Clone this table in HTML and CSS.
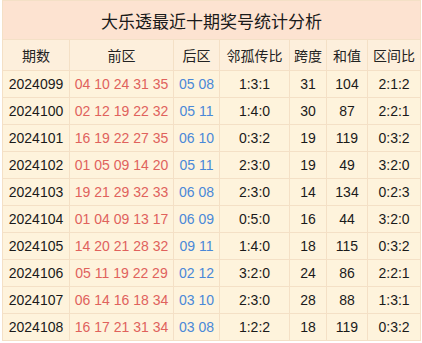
FILE: index.html
```html
<!DOCTYPE html>
<html lang="zh">
<head>
<meta charset="utf-8">
<link rel="stylesheet" href="styles.css">
</head>
<body>
<div class="wrap">
<table class="stats">
<colgroup>
<col class="c1"><col class="c2"><col class="c3"><col class="c4"><col class="c5"><col class="c6"><col class="c7">
</colgroup>
<thead>
<tr class="title"><th colspan="7">大乐透最近十期奖号统计分析</th></tr>
<tr class="head"><th>期数</th><th>前区</th><th>后区</th><th>邻孤传比</th><th>跨度</th><th>和值</th><th>区间比</th></tr>
</thead>
<tbody>
<tr><td>2024099</td><td class="red">04 10 24 31 35</td><td class="blue">05 08</td><td>1:3:1</td><td>31</td><td>104</td><td>2:1:2</td></tr>
<tr><td>2024100</td><td class="red">02 12 19 22 32</td><td class="blue">05 11</td><td>1:4:0</td><td>30</td><td>87</td><td>2:2:1</td></tr>
<tr><td>2024101</td><td class="red">16 19 22 27 35</td><td class="blue">06 10</td><td>0:3:2</td><td>19</td><td>119</td><td>0:3:2</td></tr>
<tr><td>2024102</td><td class="red">01 05 09 14 20</td><td class="blue">05 11</td><td>2:3:0</td><td>19</td><td>49</td><td>3:2:0</td></tr>
<tr><td>2024103</td><td class="red">19 21 29 32 33</td><td class="blue">06 08</td><td>2:3:0</td><td>14</td><td>134</td><td>0:2:3</td></tr>
<tr><td>2024104</td><td class="red">01 04 09 13 17</td><td class="blue">06 09</td><td>0:5:0</td><td>16</td><td>44</td><td>3:2:0</td></tr>
<tr><td>2024105</td><td class="red">14 20 21 28 32</td><td class="blue">09 11</td><td>1:4:0</td><td>18</td><td>115</td><td>0:3:2</td></tr>
<tr><td>2024106</td><td class="red">05 11 19 22 29</td><td class="blue">02 12</td><td>3:2:0</td><td>24</td><td>86</td><td>2:2:1</td></tr>
<tr><td>2024107</td><td class="red">06 14 16 18 34</td><td class="blue">03 10</td><td>2:3:0</td><td>28</td><td>88</td><td>1:3:1</td></tr>
<tr><td>2024108</td><td class="red">16 17 21 31 34</td><td class="blue">03 08</td><td>1:2:2</td><td>18</td><td>119</td><td>0:3:2</td></tr>
</tbody>
</table>
</div>
</body>
</html>
```
FILE: styles.css
```css
html, body {
  margin: 0;
  padding: 0;
  background: #ffffff;
}
.wrap {
  padding: 0 2px;
}
.stats {
  width: 418px;
  table-layout: fixed;
  border-collapse: collapse;
  font-family: "Liberation Sans", "Noto Sans CJK SC", sans-serif;
  font-size: 14px;
  color: #1a1a1a;
  background: #fef3dc;
  border: 1px solid #f6dccd;
}
.c1 { width: 67px; }
.c2 { width: 104px; }
.c3 { width: 46px; }
.c4 { width: 70px; }
.c5 { width: 37px; }
.c6 { width: 41px; }
.c7 { width: 53px; }
.stats th, .stats td {
  padding: 0;
  text-align: center;
  font-weight: normal;
  border: 1px solid #f4e0c6;
  white-space: nowrap;
  overflow: hidden;
}
.title th {
  height: 38px;
  background: #fde3d1;
  font-size: 17px;
  color: #1a1a1a;
  font-family: "Noto Sans CJK SC", sans-serif;
  border-bottom: 1px solid #f4e0c6;
}
.head th {
  height: 30px;
  background: #fdefdc;
  font-family: "Noto Sans CJK SC", sans-serif;
  font-size: 14px;
  color: #222;
}
.stats td {
  height: 26px;
}
.red { color: #e0625c; }
.blue { color: #4a88d8; }
```
